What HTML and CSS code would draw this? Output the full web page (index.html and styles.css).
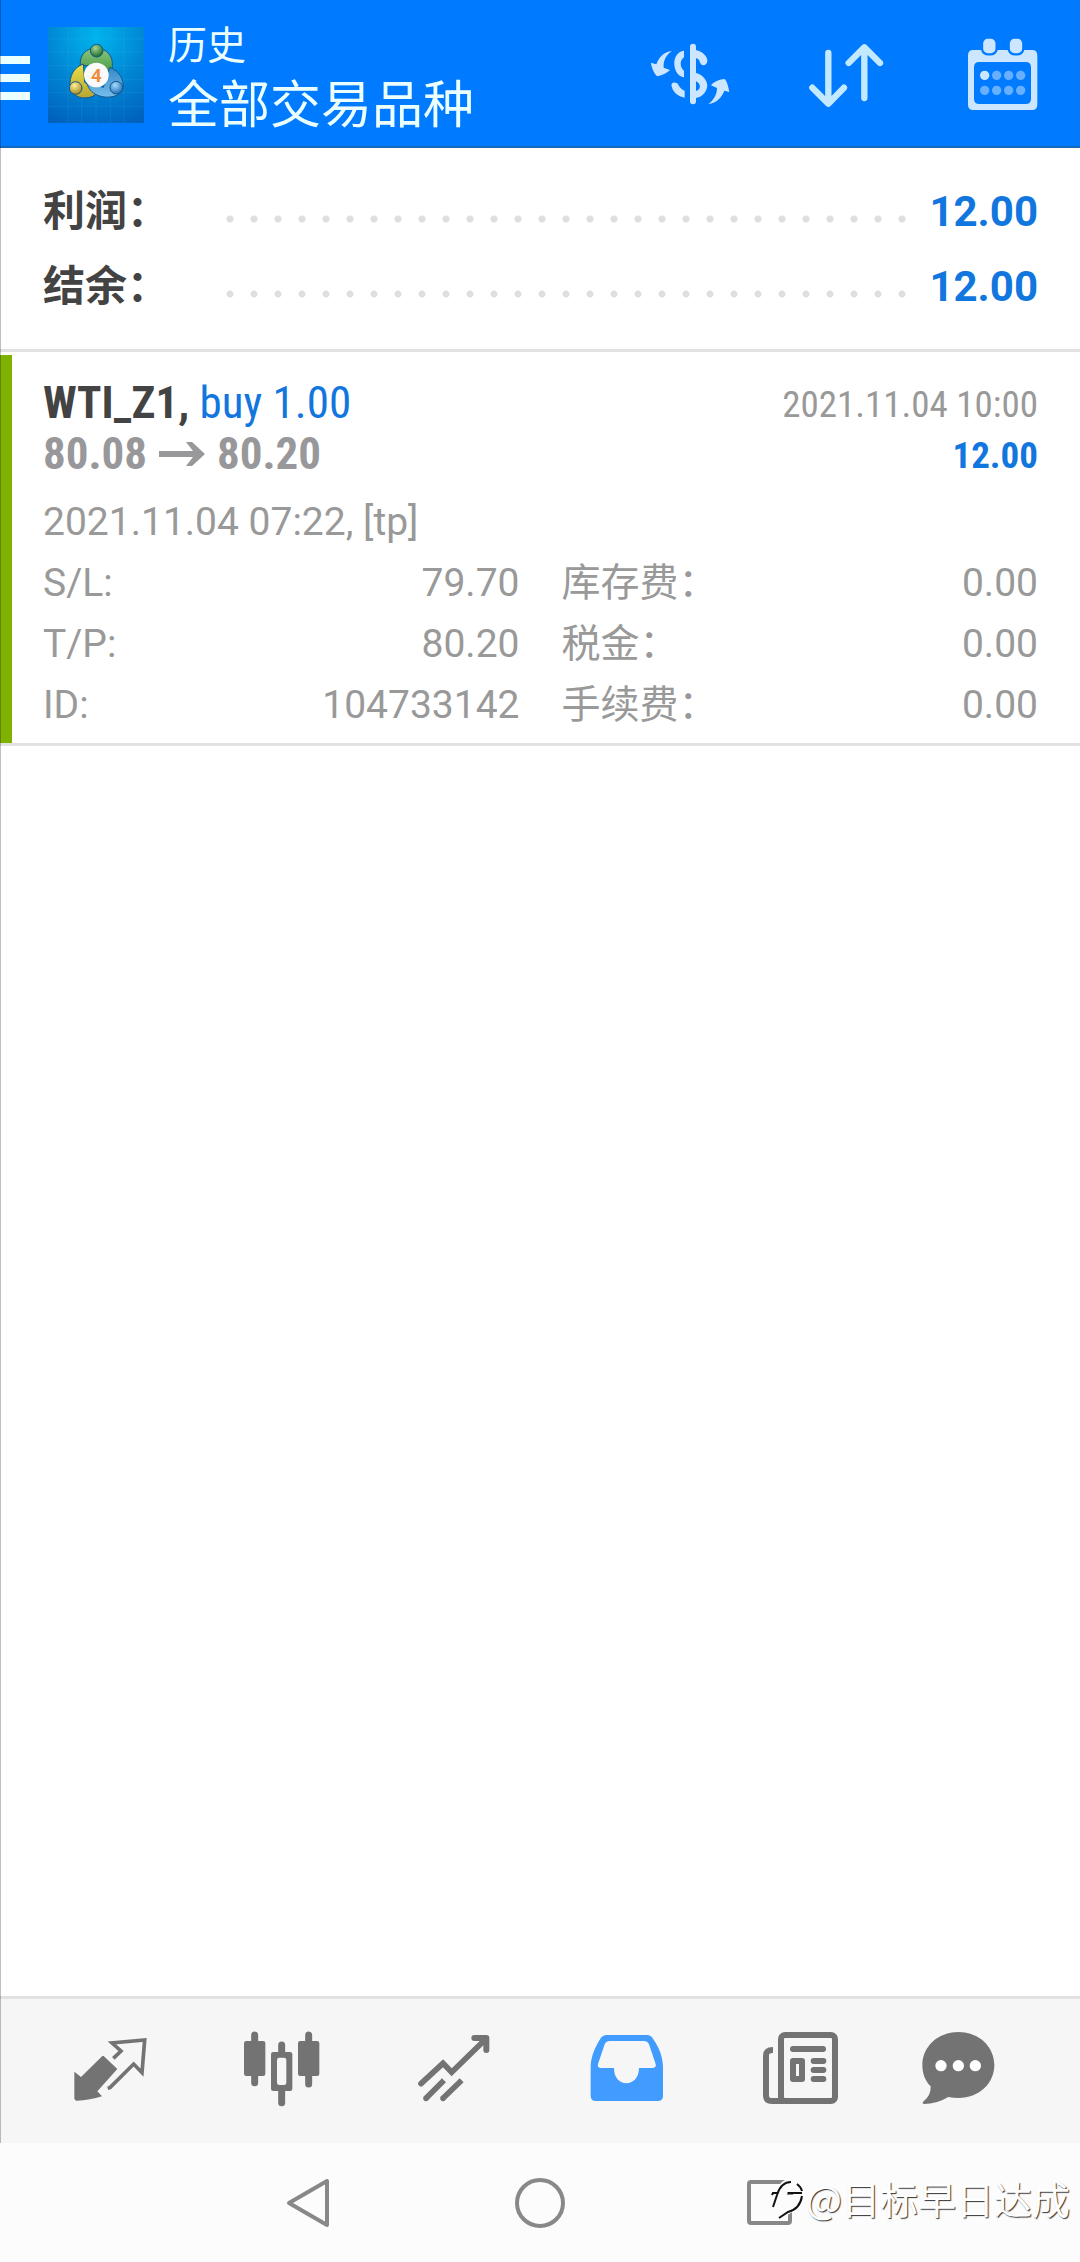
FILE: index.html
```html
<!DOCTYPE html>
<html lang="zh-CN">
<head>
<meta charset="utf-8">
<meta name="viewport" content="width=device-width, initial-scale=1">
<title>历史</title>
<link rel="stylesheet" href="styles.css">
</head>
<body>
<div class="app">
  <header class="header">
    <button class="menu" aria-label="菜单"><span class="menu-bar"></span><span class="menu-bar"></span><span class="menu-bar"></span></button>
    <svg class="logo" viewBox="24 24 288 288" aria-hidden="true">
      <defs>
        <radialGradient id="sky" cx=".5" cy=".1" r="1"><stop offset="0" stop-color="#00b4ec"/><stop offset=".5" stop-color="#0087d4"/><stop offset="1" stop-color="#0060bc"/></radialGradient>
        <linearGradient id="green" x1="0" y1="0" x2="0" y2="1"><stop offset="0" stop-color="#8cc77c"/><stop offset="1" stop-color="#2f8a35"/></linearGradient>
        <linearGradient id="gold" x1="0" y1="0" x2="0" y2="1"><stop offset="0" stop-color="#ecdf45"/><stop offset="1" stop-color="#b4a634"/></linearGradient>
        <linearGradient id="blue" x1="0" y1="0" x2="0" y2="1"><stop offset="0" stop-color="#3589c8"/><stop offset="1" stop-color="#77bdea"/></linearGradient>
        <radialGradient id="ball-green" cx=".4" cy=".3" r=".7"><stop offset="0" stop-color="#a5d692"/><stop offset="1" stop-color="#1d6c2c"/></radialGradient>
        <radialGradient id="ball-gold" cx=".4" cy=".3" r=".7"><stop offset="0" stop-color="#fff09a"/><stop offset="1" stop-color="#a88b1c"/></radialGradient>
        <radialGradient id="ball-blue" cx=".4" cy=".3" r=".7"><stop offset="0" stop-color="#a5daff"/><stop offset="1" stop-color="#2171b9"/></radialGradient>
      </defs>
      <rect x="24" y="24" width="288" height="288" fill="url(#sky)"/>
      <path d="M84 24v288M125 24v288M168 24v288M211 24v288M252 24v288M24 60h288M24 99h288M24 140h288M24 182h288M24 220h288M24 262h288" stroke="#4fc3ff" stroke-opacity=".2" stroke-width="2"/>
      <g stroke="#17568a" stroke-width="3">
        <path d="M121 140C118 105 140 88 168 87C200 89 220 110 217 143C215 165 208 180 196 187L184 140Z" fill="url(#green)"/>
        <path d="M130 135C103 144 86 170 91 206C99 236 132 243 158 232L178 218L134 190Z" fill="url(#gold)"/>
        <path d="M209 145C238 156 252 180 249 208C238 239 192 240 165 225C150 216 143 203 140 191L190 205Z" fill="url(#blue)"/>
        <circle cx="170" cy="95" r="19" fill="url(#ball-green)"/>
        <circle cx="107" cy="207" r="19" fill="url(#ball-gold)"/>
        <circle cx="229" cy="206" r="19" fill="url(#ball-blue)"/>
      </g>
      <circle cx="169" cy="168" r="37" fill="#fafafa"/>
      <text class="logo-digit" x="169" y="188" text-anchor="middle">4</text>
    </svg>
    <div class="heading">
      <p class="heading-section">历史</p>
      <h1 class="heading-title">全部交易品种</h1>
    </div>
    <nav class="actions" aria-label="操作">
      <button class="action" aria-label="交易品种">
        <svg class="icon" viewBox="120 69 300 300">
          <path d="M279 140V304" fill="none" stroke="#cce6ff" stroke-width="18" stroke-linecap="round"/>
          <path d="M252 152C232 154 221 173 223 194C225 215 235 229 252 232V212C239 203 239 180 252 172ZM215 259C211 244 231 245 234 253C239 263 245 269 254 272V293C234 290 218 276 215 259ZM287 150C309 154 324 172 322 184C320 199 303 200 300 187C298 179 293 175 287 174ZM287 218C309 224 321 240 322 257C320 276 306 292 287 294V273C302 270 306 252 287 243Z" fill="#cce6ff"/>
          <path d="M216 153C200 163 189 180 191 203L210 210C203 216 191 225 173 229C165 226 154 203 153 188L169 193C177 173 190 155 216 153ZM325 312C342 300 351 283 351 264L333 256C344 243 360 238 374 237C380 242 386 262 388 276L373 272C365 292 350 309 325 312Z" fill="#cce6ff"/>
        </svg>
      </button>
      <button class="action" aria-label="排序">
        <svg class="icon" viewBox="588 69 300 300" fill="none" stroke="#c3e9ff" stroke-width="19" stroke-linecap="round" stroke-linejoin="round"><path d="M685 159V307M637 263L685 311L732 263M793 294V144M746 189L793 142L840 189"/></svg>
      </button>
      <button class="action" aria-label="日期">
        <svg class="icon" viewBox="1056 69 300 300">
          <path fill="#cce6ff" fill-rule="evenodd" d="M1120 150H1296Q1312 150 1312 166V314Q1312 330 1296 330H1120Q1104 330 1104 314V166Q1104 150 1120 150ZM1138 186Q1122 186 1122 202V296Q1122 312 1138 312H1277Q1293 312 1293 296V202Q1293 186 1277 186Z"/>
          <rect x="1146" y="113" width="44" height="50" rx="17" fill="#cce6ff" stroke="#007aff" stroke-width="7"/>
          <rect x="1226" y="113" width="44" height="50" rx="17" fill="#cce6ff" stroke="#007aff" stroke-width="7"/>
          <circle cx="1154" cy="226" r="14" fill="#cce6ff"/>
          <g fill="#66b0ff"><circle cx="1190" cy="226" r="14"/><circle cx="1226" cy="226" r="14"/><circle cx="1262" cy="226" r="14"/><circle cx="1154" cy="271" r="14"/><circle cx="1190" cy="271" r="14"/><circle cx="1226" cy="271" r="14"/><circle cx="1262" cy="271" r="14"/></g>
        </svg>
      </button>
    </nav>
  </header>

  <main class="main">
    <section class="summary">
      <div class="summary-row"><span class="summary-label">利润：</span><span class="leader"></span><span class="summary-value">12.00</span></div>
      <div class="summary-row"><span class="summary-label">结余：</span><span class="leader"></span><span class="summary-value">12.00</span></div>
    </section>

    <article class="deal">
      <div class="deal-row">
        <h2 class="deal-title">WTI_Z1, <span class="deal-side">buy 1.00</span></h2>
        <time class="deal-time">2021.11.04 10:00</time>
      </div>
      <div class="deal-row">
        <p class="deal-prices">80.08
          <svg class="arrow" viewBox="0 0 46 26" role="img" aria-label="至"><path d="M0 10H34L27 1H33L46 13L33 25H27L34 16H0Z" fill="#98989b"/></svg>
          80.20</p>
        <span class="deal-profit">12.00</span>
      </div>
      <div class="details">
        <p class="detail-wide">2021.11.04 07:22, [tp]</p>
        <p class="detail"><span>S/L:</span><span>79.70</span></p>
        <p class="detail"><span>库存费：</span><span>0.00</span></p>
        <p class="detail"><span>T/P:</span><span>80.20</span></p>
        <p class="detail"><span>税金：</span><span>0.00</span></p>
        <p class="detail"><span>ID:</span><span>104733142</span></p>
        <p class="detail"><span>手续费：</span><span>0.00</span></p>
      </div>
    </article>
  </main>

  <nav class="tabs" aria-label="主导航">
    <a class="tab" href="#quotes" aria-label="行情">
      <svg class="icon" viewBox="60 123 300 300"><path d="M191 228L232 267L172 334L186 349Q150 361 110 362Q103 362 103 355V275L123 291L187 228Z" fill="#737373"/><path d="M203 325L210 323L281 252L306 278L314 180L216 189L243 213L220 235" fill="none" stroke="#737373" stroke-width="11"/></svg>
    </a>
    <a class="tab" href="#charts" aria-label="图表">
      <svg class="icon" viewBox="576 123 300 300"><path d="M644 165V308M806 165V312M725 195V225M725 325V368" stroke="#737373" stroke-width="21" stroke-linecap="round"/><rect x="612" y="183" width="64" height="105" rx="7" fill="#737373"/><rect x="774" y="183" width="64" height="105" rx="7" fill="#737373"/><rect x="693" y="216" width="64" height="117" rx="7" fill="#737373"/><rect x="711" y="233" width="28" height="82" rx="7" fill="#f6f6f6"/></svg>
    </a>
    <a class="tab" href="#trade" aria-label="交易">
      <svg class="icon" viewBox="1092 123 300 300" fill="none" stroke="#737373" stroke-width="17"><path d="M1143 311L1209 250L1235 277L1338 176" stroke-linecap="round"/><path d="M1303 174H1339V210" stroke-width="18" stroke-linecap="round" stroke-linejoin="round"/><path d="M1158 355L1212 301M1209 355L1265 301"/><path d="M1158 355h.1M1209 355h.1" stroke-linecap="round"/></svg>
    </a>
    <a class="tab" href="#history" aria-label="历史" aria-current="page">
      <svg class="icon" viewBox="48 123 300 300"><path d="M140 165H262Q272 165 279 176C297 202 309 230 309 262V347Q309 363 293 363H108Q92 363 92 347V262C92 230 105 202 121 176Q128 165 140 165ZM150 183Q139 183 134 193L114 252Q111 264 124 264H162C161 325 237 325 237 264H276Q290 264 287 252L267 193Q262 183 251 183Z" fill="#429bff" fill-rule="evenodd"/></svg>
    </a>
    <a class="tab" href="#news" aria-label="新闻">
      <svg class="icon" viewBox="564 123 300 300" fill="none" stroke="#737373" stroke-width="18"><rect x="663" y="165" width="162" height="198" rx="12"/><path d="M639 210C625 210 618 215 618 227V347Q618 363 636 363H672"/><path d="M699 207H789M761 243H790M761 270H790M761 297H790" stroke-linecap="round"/><rect x="690" y="234" width="45" height="72" rx="9" fill="#737373" stroke="none"/><rect x="708" y="252" width="9" height="36" fill="#f6f6f6" stroke="none"/></svg>
    </a>
    <a class="tab" href="#messages" aria-label="消息">
      <svg class="icon" viewBox="1080 123 300 300"><path d="M1195 156C1258 156 1303 201 1303 255C1303 311 1256 354 1196 354Q1180 354 1165 351Q1130 372 1092 372Q1084 370 1091 364Q1113 346 1112 319C1095 302 1087 280 1087 255C1087 201 1133 156 1195 156Z" fill="#737373"/><g fill="#fff"><circle cx="1143" cy="257" r="17"/><circle cx="1195" cy="257" r="17"/><circle cx="1246" cy="257" r="17"/></g></svg>
    </a>
  </nav>

  <footer class="system">
    <button class="key" aria-label="返回"><svg class="key-icon" viewBox="0 0 56 56"><path d="M45 6V50L7 28Z"/></svg></button>
    <button class="key" aria-label="主屏幕"><svg class="key-icon" viewBox="0 0 56 56"><circle cx="28" cy="28" r="23"/></svg></button>
    <button class="key" aria-label="最近任务"><svg class="key-icon" viewBox="0 0 56 56"><rect x="7" y="7" width="41" height="41" rx="2"/></svg></button>
    <div class="watermark">
      <svg class="watermark-icon" viewBox="0 0 34 44"><path d="M4 16Q10 2 20 3Q30 5 31 18Q29 36 9 42L7 30H3Z" fill="#fcfcfc"/><path d="M16 16H22V19H16Z" fill="#888"/><path d="M1 19L2 17H6M2 31L6 19Q10 6 20 6M26 8Q30 11 31 15M17 17H31M31 20Q29 33 17 36L8 42" fill="none" stroke="#111" stroke-width="2"/></svg>
      <span>@目标早日达成</span>
    </div>
  </footer>
</div>
</body>
</html>
```
FILE: styles.css
```css
* {
  box-sizing: border-box;
}

body {
  margin: 0;
  background: #fff;
  color: #434343;
  font-family: Roboto, "Noto Sans CJK SC", sans-serif;
}

h1, h2, p {
  margin: 0;
  font-weight: 400;
}

button {
  padding: 0;
  border: 0;
  background: none;
  font: inherit;
}

svg {
  display: block;
}

.app {
  position: relative;
  display: flex;
  flex-direction: column;
  min-height: 100vh;
}

/* hairline on the left edge of the screen */
.app::before {
  content: "";
  position: absolute;
  inset: 0 auto 0 0;
  width: 1px;
  background: rgba(0, 0, 0, 0.25);
}

.header {
  display: flex;
  align-items: center;
  height: 148px;
  border-bottom: 2px solid #1668b8;
  background: #007aff;
  color: #ebffff;
}

.menu {
  display: flex;
  flex-direction: column;
  gap: 10px;
  width: 30px;
  padding-top: 10px;
}

.menu-bar {
  height: 8px;
  background: #ebffff;
}

.logo {
  width: 96px;
  height: 96px;
  margin: 4px 24px 0 18px;
}

.logo-digit {
  font: 700 54px "Open Sans", sans-serif;
  fill: #f08c3c;
}

.heading {
  flex: 1;
  padding-top: 10px;
}

.heading-section {
  font-size: 39px;
  line-height: 56px;
}

.heading-title {
  font-size: 51px;
  line-height: 64px;
}

.actions {
  display: flex;
}

.action {
  display: flex;
  justify-content: center;
  width: 156px;
}

.icon {
  width: 100px;
  height: 100px;
}

.main {
  flex: 1;
}

.summary {
  padding: 26px 42px 25px 43px;
  border-bottom: 3px solid #e2e2e2;
  font-size: 42px;
  font-weight: 700;
  line-height: 75px;
}

.summary-row {
  display: flex;
  align-items: center;
  height: 75px;
}

.summary-label {
  width: 175px;
}

.leader {
  flex: 1;
  height: 24px;
  margin: 14px 18px 0 0;
  background: radial-gradient(circle, #dfdfdf 3px, transparent 4px) 0 0 / 24px 24px;
}

.summary-value {
  color: #1176de;
}

.deal {
  margin-top: 3px;
  padding: 22px 42px 7px 31px;
  border-left: 12px solid #7fb100;
  box-shadow: 0 3px #e2e2e2;
}

.deal-row {
  display: flex;
  justify-content: space-between;
  height: 51px;
  font-family: "Roboto Condensed", "Liberation Sans Narrow", Roboto, sans-serif;
  font-size: 45px;
  line-height: 51px;
}

.deal-title,
.deal-prices,
.deal-profit {
  font-size: inherit;
  font-weight: 700;
}

.deal-side {
  color: #1176de;
  font-weight: 400;
}

.deal-prices {
  display: flex;
  align-items: center;
  gap: 12px;
  color: #98989b;
}

.arrow {
  width: 46px;
  height: 26px;
}

.deal-time,
.deal-profit {
  font-size: 37px;
  line-height: 56px;
}

.deal-time {
  color: #999;
}

.deal-profit {
  color: #1176de;
}

.details {
  display: grid;
  grid-template-columns: 1fr 1fr;
  column-gap: 42px;
  margin-top: 13px;
  color: #999;
  font-size: 39px;
  line-height: 61px;
}

.detail-wide {
  grid-column: 1 / -1;
}

.detail {
  display: flex;
  justify-content: space-between;
  height: 61px;
}

.tabs {
  display: flex;
  align-items: center;
  height: 147px;
  padding: 0 24px;
  border-top: 3px solid #e2e2e2;
  background: #f6f6f6;
}

.tab {
  display: flex;
  flex: 1;
  justify-content: center;
}

.system {
  position: relative;
  display: flex;
  align-items: center;
  justify-content: center;
  height: 119px;
  background: #fcfcfc;
}

.key {
  display: flex;
  justify-content: center;
  width: 230px;
}

.key-icon {
  width: 56px;
  height: 56px;
  fill: none;
  stroke: #888;
  stroke-width: 4;
  stroke-linejoin: round;
}

.watermark {
  position: absolute;
  right: 10px;
  bottom: 36px;
  display: flex;
  align-items: center;
  gap: 1px;
  color: #fff;
  font-family: "Noto Sans CJK SC", sans-serif;
  font-size: 38px;
  line-height: 56px;
  text-shadow: 1px 1px 1px #333;
}

.watermark-icon {
  width: 34px;
  height: 44px;
}
```
